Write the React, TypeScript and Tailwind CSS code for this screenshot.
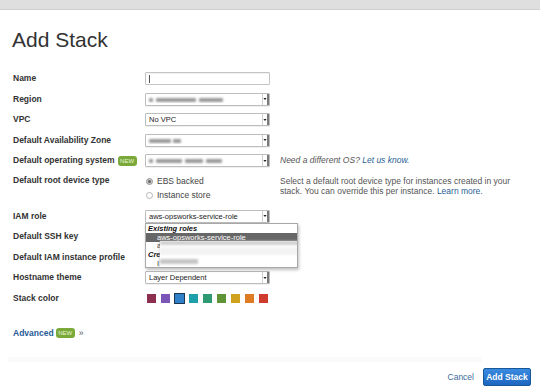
import React from "react";

const FONT = { fontFamily: '"Liberation Sans", Arial, Helvetica, sans-serif' };

function Arrow() {
  return (
    <div className="flex h-full w-[7px] items-center justify-center border-l border-[#cfcfcf] border-r-2 border-r-[#7a7a7a]">
      <svg width="5" height="4" viewBox="0 0 5 4">
        <path d="M0.5 0.8 L4.5 0.8 L2.5 3.4 Z" fill="#222" />
      </svg>
    </div>
  );
}

function Select({ children }: { children?: React.ReactNode }) {
  return (
    <div className="flex h-[13px] w-[125px] items-center rounded-[1px] border border-[#bdbdbd] bg-white shadow-[0_1px_0_rgba(0,0,0,0.06)]">
      <div className="flex-1 overflow-hidden whitespace-nowrap pl-[3px] text-[7.5px] leading-none text-[#222]">
        {children}
      </div>
      <Arrow />
    </div>
  );
}

function Blur({ w }: { w: number }) {
  return (
    <span
      className="inline-block h-[4px] rounded-[1px] bg-[#9a9a9a] align-middle blur-[1.2px]"
      style={{ width: w }}
    />
  );
}

function Row({ label, children, extra, h = "h-[20.5px]" }: { label: React.ReactNode; children?: React.ReactNode; extra?: React.ReactNode; h?: string }) {
  return (
    <div className={`flex items-center ${h}`}>
      <div className="w-[132px] shrink-0 text-[8.5px] font-bold text-[#333]">{label}</div>
      <div className="relative w-[125px] shrink-0">{children}</div>
      {extra && <div className="ml-[10px] text-[8.5px] text-[#555]">{extra}</div>}
    </div>
  );
}

function Badge() {
  return (
    <span className="ml-[3px] inline-flex h-[10px] items-center rounded-[3px] bg-[#7aa93a] px-[2.5px] text-[6px] font-normal leading-none text-[#e9f5d5]">
      NEW
    </span>
  );
}

const swatches = ["#8d2f4e", "#7c55b9", "#2f80c8", "#1ea0aa", "#2d9a74", "#5e9435", "#cfa21d", "#df7b23", "#cf3b2e"];

export default function App() {
  return (
    <div className="relative h-[390px] w-[540px] overflow-hidden bg-white" style={FONT}>
      <div className="h-[10px] border-b border-[#cfcfcf] bg-[#dfdfdf]" />
      <div className="pl-[12px] pt-[19px] text-[21px] font-light leading-none text-[#333]">Add Stack</div>

      <div className="mt-[18.5px] pl-[13px]">
        <Row label="Name">
          <div className="flex h-[13px] w-[125px] items-center rounded-[1px] border border-[#c4c4c4] bg-white pl-[3px] shadow-[inset_0_1px_1px_rgba(0,0,0,0.06)]">
            <div className="h-[8px] w-px bg-[#555]" />
          </div>
        </Row>
        <Row label="Region">
          <Select>
            <span className="inline-flex items-center gap-[3px]"><Blur w={4} /><Blur w={40} /><Blur w={24} /></span>
          </Select>
        </Row>
        <Row label="VPC">
          <Select>No VPC</Select>
        </Row>
        <Row label="Default Availability Zone">
          <Select>
            <span className="inline-flex items-center gap-[2px]"><Blur w={22} /><Blur w={8} /></span>
          </Select>
        </Row>
        <Row
          label={<span className="flex items-center">Default operating system<Badge /></span>}
          extra={
            <span className="italic">
              Need a different OS? <span className="text-[#2a5f95]">Let us know.</span>
            </span>
          }
        >
          <Select>
            <span className="inline-flex items-center gap-[3px]"><Blur w={4} /><Blur w={26} /><Blur w={18} /><Blur w={16} /></span>
          </Select>
        </Row>

        <div className="flex h-[35px] pt-[3px]">
          <div className="flex h-[12px] w-[132px] shrink-0 items-center text-[8.5px] font-bold text-[#333]">Default root device type</div>
          <div className="w-[125px] shrink-0 text-[8.5px] text-[#444]">
            <div className="flex h-[14px] items-center pl-[1px]">
              <span className="mr-[4px] flex h-[7px] w-[7px] items-center justify-center rounded-full border border-[#9a9a9a] bg-[#c9c9c9]">
                <span className="h-[3px] w-[3px] rounded-full bg-[#666]" />
              </span>
              EBS backed
            </div>
            <div className="flex h-[14px] items-center pl-[1px]">
              <span className="mr-[4px] h-[7px] w-[7px] rounded-full border border-[#b5b5b5] bg-white" />
              Instance store
            </div>
          </div>
          <div className="ml-[10px] pt-[2px] text-[8.5px] leading-[10px] text-[#555]">
            Select a default root device type for instances created in your
            <br />
            stack. You can override this per instance. <span className="text-[#2a5f95]">Learn more.</span>
          </div>
        </div>

        <Row label="IAM role">
          <div className="relative">
            <Select>aws-opsworks-service-role</Select>
            <div className="absolute left-0 top-[13px] z-10 h-[45px] w-[153px] overflow-hidden border border-[#a8a8a8] bg-white text-[7.5px] leading-none shadow-[1px_2px_3px_rgba(0,0,0,0.25)]">
              <div className="flex h-[9px] items-center pl-[2px] font-bold italic text-[#111]">Existing roles</div>
              <div className="flex h-[9px] items-center bg-[#676767] pl-[11px] text-white">aws-opsworks-service-role</div>
              <div className="flex h-[8px] items-center pl-[11px] text-[#333]">a</div>
              <div className="flex h-[9px] items-center pl-[2px] font-bold italic text-[#111]">Create new role</div>
              <div className="flex h-[9px] items-center pl-[11px] text-[#333]">I</div>
              <div className="absolute left-[14px] top-[17px] h-[27px] w-[140px] bg-white shadow-[-1px_0_2px_rgba(0,0,0,0.15)]">
                <div className="h-[4px] w-full bg-[#cfcfcf] blur-[1px]" />
                <div className="mt-[2px] h-[8px] w-full bg-[#f3f3f3] blur-[1px]" />
                <div className="mt-[4px] h-[5px] w-[38px] bg-[#c6c6c6] blur-[1.2px]" />
              </div>
            </div>
          </div>
        </Row>
        <Row label="Default SSH key" />
        <Row label="Default IAM instance profile" />
        <Row label="Hostname theme">
          <Select>Layer Dependent</Select>
        </Row>
        <Row label="Stack color">
          <div className="flex items-center gap-[5px] pl-[2px]">
            {swatches.map((c, i) =>
              i === 2 ? (
                <div key={c} className="-mx-[1px] h-[11px] w-[11px] border border-[#1b3550] p-0" style={{ background: c }} />
              ) : (
                <div key={c} className="h-[9px] w-[9px]" style={{ background: c }} />
              )
            )}
          </div>
        </Row>

        <div className="mt-[18px] flex items-center text-[8.5px] font-bold text-[#1f5c97]">
          Advanced
          <span className="ml-[2px] inline-flex h-[10px] items-center rounded-[3px] bg-[#7aa93a] px-[2.5px] text-[6px] font-normal leading-none text-[#e9f5d5]">NEW</span>
          <span className="ml-[4px] font-normal text-[#555]">»</span>
        </div>
      </div>

      <div className="mx-[8px] mt-[18px] h-[5px] w-[474px] bg-[#fafafa]" />

      <div className="mt-[6px] flex items-center justify-end gap-[9px] pr-[9px]">
        <span className="text-[8.5px] text-[#3e6b99]">Cancel</span>
        <div className="flex h-[18px] w-[48px] items-center justify-center rounded-[2px] border border-[#17589b] bg-gradient-to-b from-[#3a8be0] to-[#1e66c0] text-[8.5px] font-bold text-white">
          Add Stack
        </div>
      </div>
    </div>
  );
}
